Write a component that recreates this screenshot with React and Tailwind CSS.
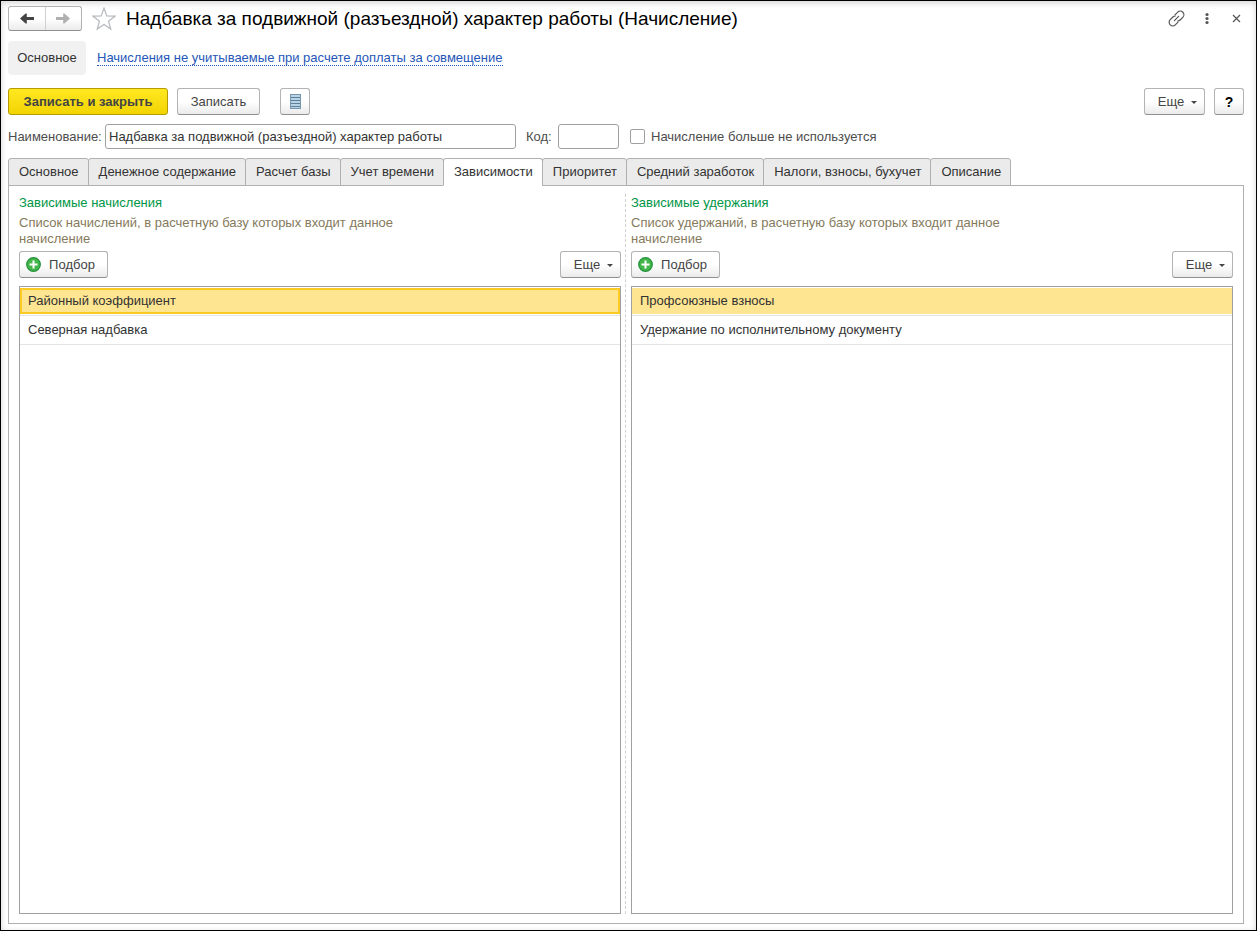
// App.jsx — Accrual card: toolbar, name/code fields and the "Зависимости" tab

import { useState } from 'react'

const TABS = [
  'Основное',
  'Денежное содержание',
  'Расчет базы',
  'Учет времени',
  'Зависимости',
  'Приоритет',
  'Средний заработок',
  'Налоги, взносы, бухучет',
  'Описание',
]

const BUTTON = 'flex items-center justify-center h-[27px] rounded-[3px] border border-[#b3b3b3] border-b-[#8f8f8f] bg-linear-to-b from-white from-50% to-[#ebebeb] text-[#444]'

function ArrowIcon({ className }) {
  return (
    <svg width="14" height="11" viewBox="0 0 14 11" fill="currentColor" className={className}>
      <path d="M0 5.5L5.6 0.6h1.2V4.1H14v2.8H6.8v3.5H5.6z" />
    </svg>
  )
}

function StarIcon() {
  return (
    <svg width="24" height="24" viewBox="0 0 24 24" fill="none" stroke="#b4b8bd" strokeWidth="1.2">
      <path d="M12 1.3l2.8 7.7 8.2.2-6.5 5 2.3 7.9-6.8-4.6-6.8 4.6 2.3-7.9-6.5-5 8.2-.2z" />
    </svg>
  )
}

function LinkIcon() {
  return (
    <svg width="17" height="17" viewBox="0 0 17 17" fill="none" stroke="#555" strokeWidth="1.2" strokeLinecap="round">
      <path d="M7 4.9l2.7-2.7a3.6 3.6 0 0 1 5.1 5.1l-2.7 2.7a3.6 3.6 0 0 1-2.4 1" />
      <path d="M10 12.1l-2.7 2.7a3.6 3.6 0 0 1-5.1-5.1L4.9 7a3.6 3.6 0 0 1 2.4-1" />
      <path d="M6.4 10.6l4.2-4.2" />
    </svg>
  )
}

function ListIcon() {
  return (
    <svg width="11" height="15" viewBox="0 0 11 15">
      <rect x="0.5" y="0.5" width="10" height="14" fill="#b9d3e6" stroke="#7795ab" />
      <path d="M1 3.5h9M1 6.5h9M1 9.5h9M1 12.5h9" stroke="#5f8099" />
    </svg>
  )
}

function PlusIcon() {
  return (
    <svg width="15" height="15" viewBox="0 0 15 15">
      <circle cx="7.5" cy="7.5" r="6.8" fill="#43b649" stroke="#22903a" strokeWidth="1.2" />
      <path d="M7.5 3.5v8M3.5 7.5h8" stroke="#fff" strokeWidth="2" />
    </svg>
  )
}

function MoreButton() {
  return (
    <button className={`${BUTTON} w-[61px] gap-[7px] pl-[6px]`}>
      Еще
      <svg width="6" height="3" viewBox="0 0 6 3" className="mt-0.5" fill="#444"><path d="M0 0h6L3 3z" /></svg>
    </button>
  )
}

function DependencyList({ title, hint, items, focused }) {
  const [selected, setSelected] = useState(0)

  return (
    <section className="flex-1 min-w-0 flex flex-col">
      <h2 className="mt-[9px] leading-4 text-[#009646]">{title}</h2>
      <p className="mt-1 max-w-[400px] leading-4 text-[#857a5c]">{hint}</p>
      <div className="mt-1 flex justify-between">
        <button className={`${BUTTON} w-[89px] gap-2 pr-[6px]`}>
          <PlusIcon />
          Подбор
        </button>
        <MoreButton />
      </div>
      <ul role="listbox" aria-label={title} className="mt-2 flex-1 border border-[#a0a0a0]">
        {items.map((item, i) => (
          <li key={item} role="option" aria-selected={i === selected} onClick={() => setSelected(i)}
            className="h-[29px] border-b border-[#e4e4e4] pt-px">
            <div className={`h-[26px] flex items-center border-2 px-1.5 ${
              i !== selected ? 'border-transparent' : focused ? 'border-[#fcca22] bg-[#fee591]' : 'border-[#fee591] bg-[#fee591]'
            }`}>
              {item}
            </div>
          </li>
        ))}
      </ul>
    </section>
  )
}

export default function App() {
  const [tab, setTab] = useState('Зависимости')

  return (
    <div className="min-h-screen flex flex-col border border-black bg-white pl-[7px] pr-3 pb-[6px] font-['Liberation_Sans',Arial,sans-serif] text-[13px] leading-4 text-[#333] shadow-[inset_0_2px_6px_#d4d4d4]">
      {/* Title bar */}
      <header className="mt-[5px] h-[25px] flex items-center">
        <div className="flex h-[25px] w-[74px] rounded-[3px] border border-[#b3b3b3] border-b-[#8f8f8f] bg-linear-to-b from-white from-50% to-[#ebebeb]">
          <button aria-label="Назад" className="flex-1 flex items-center justify-center border-r border-[#d0d0d0]">
            <ArrowIcon className="text-[#444]" />
          </button>
          <button aria-label="Вперед" className="flex-1 flex items-center justify-center">
            <ArrowIcon className="rotate-180 text-[#b0b0b0]" />
          </button>
        </div>
        <button aria-label="В избранное" className="ml-[10px]"><StarIcon /></button>
        <h1 className="ml-[10px] flex-1 text-[19px] leading-6 text-black">
          Надбавка за подвижной (разъездной) характер работы (Начисление)
        </h1>
        <button aria-label="Получить ссылку"><LinkIcon /></button>
        <button aria-label="Меню" className="ml-[19px]">
          <svg width="6" height="14" viewBox="0 0 6 14" fill="#555">
            <circle cx="3" cy="2.5" r="1.6" /><circle cx="3" cy="6.5" r="1.6" /><circle cx="3" cy="10.5" r="1.6" />
          </svg>
        </button>
        <button aria-label="Закрыть" className="ml-[22px] mr-[3px]">
          <svg width="9" height="9" viewBox="0 0 9 9" stroke="#555" strokeWidth="1.2">
            <path d="M1 1l7 7M8 1L1 8" />
          </svg>
        </button>
      </header>

      {/* Section navigation */}
      <nav className="mt-[10px] flex items-center gap-[11px]">
        <button className="h-[34px] w-[78px] rounded-[4px] bg-[#f1f1f1]">Основное</button>
        <a href="#compensation" className="border-b border-dotted border-[#2456b8] leading-[14px] text-[#2456b8]">
          Начисления не учитываемые при расчете доплаты за совмещение
        </a>
      </nav>

      {/* Commands */}
      <div className="mt-[13px] flex">
        <button className="h-[27px] w-[160px] rounded-[3px] border border-[#b59b00] bg-linear-to-b from-[#ffe81f] to-[#f3d400] font-bold text-[#444]">
          Записать и закрыть
        </button>
        <button className={`${BUTTON} ml-[9px] w-[83px]`}>Записать</button>
        <button aria-label="Список" className={`${BUTTON} ml-5 w-[30px]`}><ListIcon /></button>
        <div className="ml-auto flex gap-[9px]">
          <MoreButton />
          <button aria-label="Справка" className={`${BUTTON} w-[30px] text-[14px] font-bold text-black`}>?</button>
        </div>
      </div>

      {/* Name and code */}
      <div className="mt-[9px] flex items-center text-[#4d4d4d]">
        <label htmlFor="name" className="w-[97px]">Наименование:</label>
        <input id="name" defaultValue="Надбавка за подвижной (разъездной) характер работы"
          className="h-[25px] w-[411px] rounded-[3px] border border-[#a0a0a0] bg-white px-[3px] text-[#333] outline-none" />
        <label htmlFor="code" className="ml-[10px] w-8">Код:</label>
        <input id="code" className="h-[25px] w-[61px] rounded-[3px] border border-[#a0a0a0] bg-white px-[3px] outline-none" />
        <input id="unused" type="checkbox"
          className="ml-[11px] size-[15px] appearance-none rounded-[2px] border border-[#a0a0a0] bg-white checked:bg-[#fcca22]" />
        <label htmlFor="unused" className="ml-[6px]">Начисление больше не используется</label>
      </div>

      {/* Tabs, the active one covers the panel's top border */}
      <div role="tablist" className="relative z-10 mt-[9px] flex pl-px">
        {TABS.map(name => (
          <button key={name} role="tab" aria-selected={name === tab} onClick={() => setTab(name)}
            className={`-ml-px h-7 rounded-t-[3px] border border-[#b0b0b0] pl-[10px] pr-[9px] whitespace-nowrap ${
              name === tab ? 'border-b-white bg-white' : 'bg-[#ebebeb]'
            }`}>
            {name}
          </button>
        ))}
      </div>

      <main className="-mt-px flex-1 flex border border-[#b0b0b0] px-[10px] pb-[9px]">
        <DependencyList focused
          title="Зависимые начисления"
          hint="Список начислений, в расчетную базу которых входит данное начисление"
          items={['Районный коэффициент', 'Северная надбавка']} />
        <div className="ml-1 mr-[5px] mt-2 border-l border-dashed border-[#d0d0d0]" />
        <DependencyList
          title="Зависимые удержания"
          hint="Список удержаний, в расчетную базу которых входит данное начисление"
          items={['Профсоюзные взносы', 'Удержание по исполнительному документу']} />
      </main>
    </div>
  )
}
